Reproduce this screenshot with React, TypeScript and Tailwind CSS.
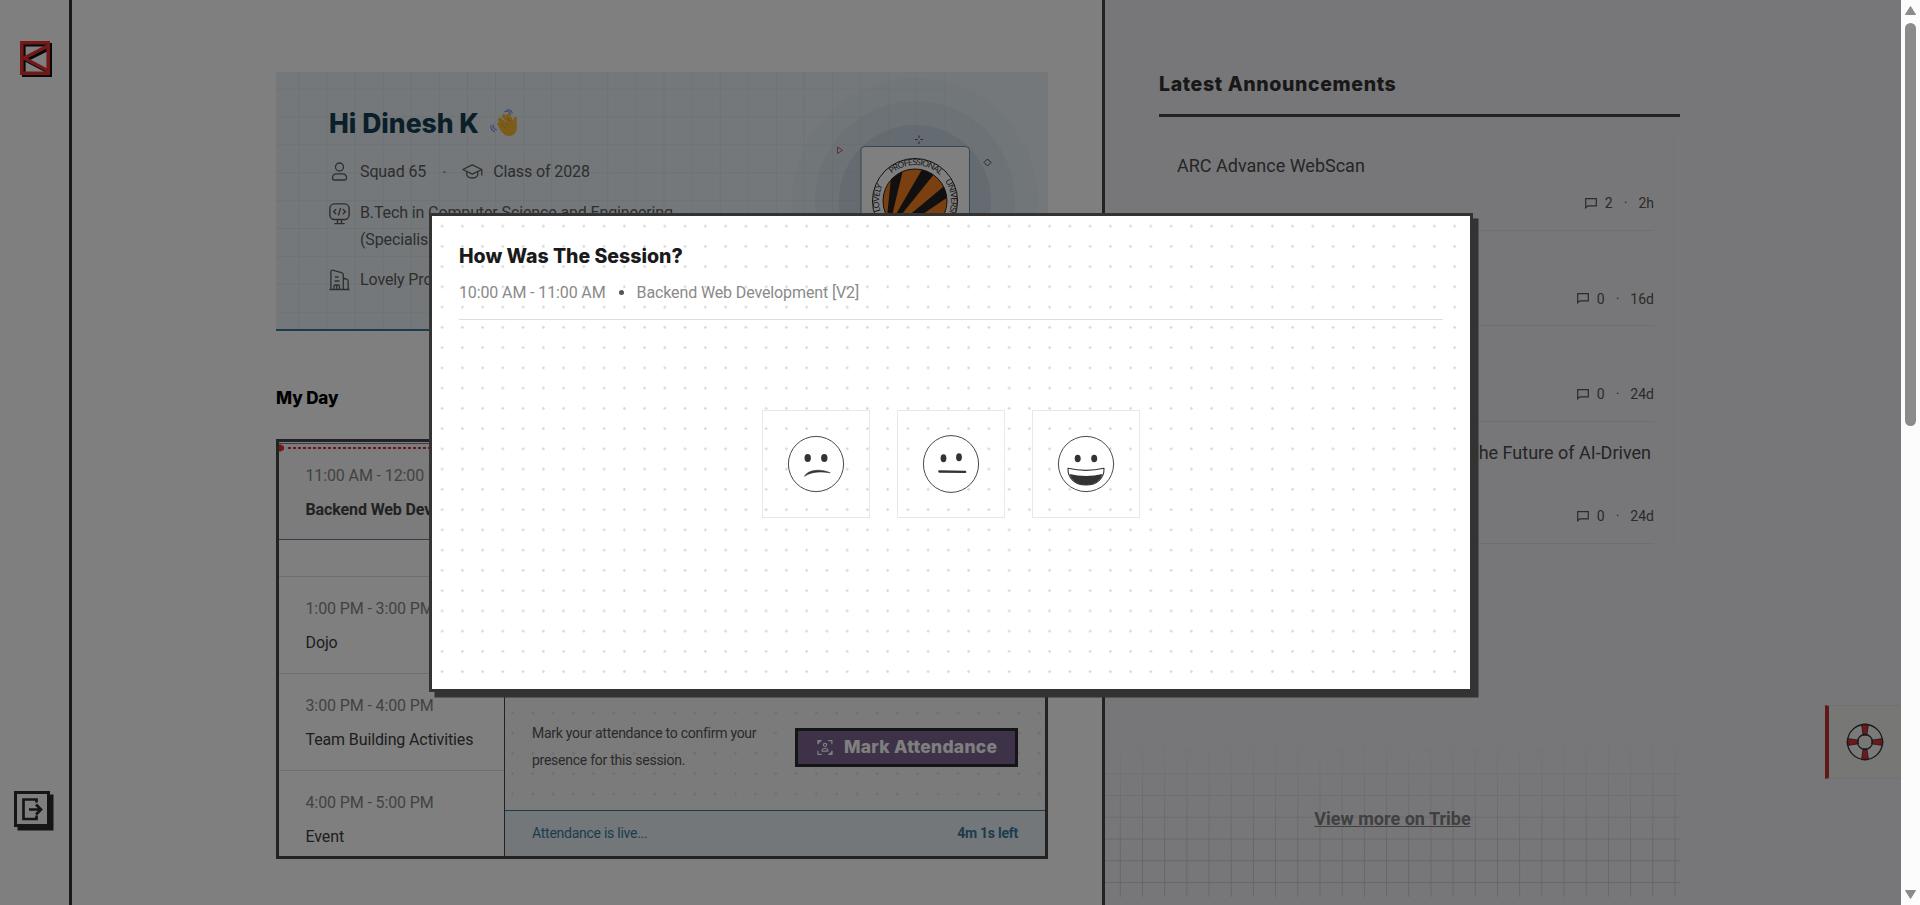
import React from "react";

const heading = "[font-family:Inter,sans-serif] font-extrabold whitespace-nowrap";

function BrandLogo() {
  return (
    <svg width="33" height="37" viewBox="0 0 33 37" className="block">
      <g transform="translate(2 2)" stroke="#111" fill="none" strokeWidth="3.6">
        <path d="M1.8 1.8H28.2V32.2H1.8Z" />
        <path d="M27.5 5.500 4 17.200 27.500 29.500" strokeWidth="3.200" />
      </g>
      <g stroke="#e63235" fill="none" strokeWidth="3.6">
        <path d="M1.8 1.8H28.200V32.200H1.800Z" />
        <path d="M27.5 5 4 17 27.500 29.500" strokeWidth="3.200" />
      </g>
    </svg>
  );
}

function LogoutIcon() {
  return (
    <svg width="30" height="30" viewBox="0 0 30 30" fill="none" stroke="#2c2c2c" strokeWidth="2.700">
      <path d="M19.500 8.500V5.500H6.500V25H19.500V21.500" />
      <path d="M12 15.500H24M19 10.500 24 15.500 19 20.500" />
    </svg>
  );
}

function UserIcon() {
  return (
    <svg width="21" height="21" viewBox="0 0 21 21" fill="none" stroke="currentColor" strokeWidth="1.3">
      <circle cx="10.500" cy="6" r="4" />
      <path d="M3.500 17.200C3.500 14 5.500 12.800 7.500 12.800H13.500C15.500 12.800 17.500 14 17.500 17.200C17.500 18.500 17 19 15.800 19H5.200C4 19 3.500 18.500 3.500 17.200Z" />
    </svg>
  );
}

function CapIcon() {
  return (
    <svg width="21" height="21" viewBox="0 0 21 21" fill="none" stroke="currentColor" strokeWidth="1.3" strokeLinejoin="round">
      <path d="M.8 8.500 10.300 3.800 19.800 8.500 10.300 13.200Z" />
      <path d="M4.800 10.800V14C6.500 18 14 18 15.800 14V10.800M19.800 8.500V14.500" />
    </svg>
  );
}

function MonitorIcon() {
  return (
    <svg width="21" height="22" viewBox="0 0 21 22" fill="none" stroke="currentColor" strokeWidth="1.4" strokeLinecap="round" strokeLinejoin="round">
      <rect x=".9" y=".9" width="19.200" height="15.600" rx="4.500" />
      <path d="M6.800 6.600 4.600 8.700 6.800 10.800M14.200 6.600 16.400 8.700 14.200 10.800M11.500 5.400 9.500 12M8.500 16.800V20.300M12.500 16.800V20.300M5.800 20.600H15.200" />
    </svg>
  );
}

function BuildingIcon() {
  return (
    <svg width="21" height="22" viewBox="0 0 21 22" fill="none" stroke="currentColor" strokeWidth="1.3">
      <path d="M.5 20.500H20.500M1.900 20.500V2.600C1.900 1.500 2.500 .9 3.500 1.100L12.500 3.500C13.800 3.900 14.300 4.500 14.300 5.600V20.500M14.300 9.200 17.500 10.200C18.800 10.600 19.200 11.200 19.200 12.200V20.500M5 20.500V17.500C5 16.500 5.500 16 6.500 16H9C10 16 10.500 16.500 10.500 17.500V20.500M7.800 16V20.500M6 8H9.500M5.500 12H10.500" />
    </svg>
  );
}

function WaveIcon() {
  return (
    <svg width="28" height="28" viewBox="0 0 28 28" className="block">
      <path d="M12 15 24 12C26 15 27.200 17 26.800 20C26.200 24.500 23 27 19 27C14.500 27 10.500 22 8.500 18Z" fill="#f8b830" />
      <g fill="none" stroke="#f8b830" strokeLinecap="round" strokeWidth="3.700">
        <path d="M9 15 15 21.500M9.800 10.500 17 18M13.700 6.900 20.500 15M18.200 6.300 22.500 14" />
        <path d="M25.300 9 25 18" strokeWidth="3.200" />
      </g>
      <path d="M11 14.500 15.500 19M13 10.800 18 16M17 8.300 20.500 13" stroke="#c98a1e" strokeWidth=".7" fill="none" />
      <path d="M14.500 3C17 1 20.500 3 20.500 6M17 1C19 .2 22 2 22.300 4.500M3 15.500C3 18.500 4.500 20.500 7 21M.8 16.500C.8 19.500 2.500 22 5 22.800" fill="none" stroke="#6b8fe0" strokeWidth="1.100" />
    </svg>
  );
}

function CommentIcon() {
  return (
    <svg width="12" height="11" viewBox="0 0 12 11" fill="none" stroke="currentColor" strokeWidth="1.200">
      <path d="M.7 .7H11.300V7.900H2.800L.7 9.800Z" />
    </svg>
  );
}

function HeroArt() {
  return (
    <svg className="absolute inset-0" width="772" height="257" viewBox="0 0 772 257">
      <defs>
        <linearGradient id="fade" x1="0" x2="1">
          <stop offset="0" stopColor="#e8f0f5" stopOpacity="0" />
          <stop offset=".55" stopColor="#e8f0f5" stopOpacity=".5" />
          <stop offset="1" stopColor="#e8f0f5" />
        </linearGradient>
        <clipPath id="disc"><circle cx="639" cy="129" r="32" /></clipPath>
      </defs>
      <rect x="500" width="272" height="257" fill="url(#fade)" />
      <circle cx="639" cy="129" r="123" fill="#a0bdcb" fillOpacity=".08" />
      <circle cx="639" cy="129" r="100" fill="#a0bdcb" fillOpacity=".15" />
      <circle cx="639" cy="129" r="76" fill="#96afc8" fillOpacity=".23" />
      <rect x="585" y="74.500" width="108.500" height="109" rx="4" fill="#fff" stroke="#6f8c9c" />
      <circle cx="639" cy="129" r="42.500" fill="#fff" stroke="#222" strokeWidth="1" />
      <circle cx="639" cy="129" r="32" fill="#f4801f" stroke="#222" strokeWidth="1" />
      <g clipPath="url(#disc)" fill="#231f20">
        <path d="M610.500 150 616 96H627.500L614.500 150Z" />
        <path d="M615.500 150 648 94 659 101 619.500 150Z" />
        <path d="M625 150 669.500 113 673 124.500 635 150Z" />
      </g>
      <g fill="#333" fontFamily="Lato, sans-serif" fontSize="8.500">
        <path id="arc" d="M603 129A36 36 0 0 1 675 129" fill="none" />
        <path id="arcR" d="M639 93A36 36 0 0 1 639 165" fill="none" />
        <path id="arcL" d="M639 165A36 36 0 0 1 639 93" fill="none" />
        <text textLength="53" lengthAdjust="spacing"><textPath href="#arc" startOffset="31">PROFESSIONAL</textPath></text>
        <text textLength="42" lengthAdjust="spacing"><textPath href="#arcR" startOffset="35">UNIVERSITY</textPath></text>
        <text textLength="27" lengthAdjust="spacing"><textPath href="#arcL" startOffset="46">LOVELY</textPath></text>
      </g>
      <path d="M561.500 75 566.500 78.300 561.500 81.500Z" fill="none" stroke="#d05060" />
      <path d="M643 63.500V66M643 69.500V72M639 67.500H641.500M644.500 67.500H647" stroke="#4c4266" />
      <path d="M711.500 87 715 90.500 711.500 94 708 90.500Z" fill="none" stroke="#4c4266" />
    </svg>
  );
}

function Hero() {
  return (
    <section className="relative h-[259px] shrink-0 border-b-2 border-[#38799c] bg-[#e8f0f5] [background-image:linear-gradient(to_right,#dae6eb_1px,transparent_1px),linear-gradient(to_bottom,#dae6eb_1px,transparent_1px)] [background-size:28.080px_27.900px] [background-position:22.500px_16.500px]">
      <HeroArt />
      <div className="relative pl-[53px] pt-[34px] text-base leading-[27px] tracking-[-0.12px] text-[#5c5c5c]">
        <div className="flex h-[34px] items-center gap-[11px]">
          <h1 className={heading + " text-[26.5px] leading-[34px] tracking-[0px] text-[#173e54]"}>Hi Dinesh K</h1>
          <WaveIcon />
        </div>
        <div className="mt-[18px] flex h-[27px] items-center">
          <UserIcon />
          <span className="ml-[10px]">Squad 65</span>
          <span className="mx-4 mt-[2px]">·</span>
          <CapIcon />
          <span className="ml-[10px]">Class of 2028</span>
        </div>
        <div className="mt-[14px] flex">
          <div className="pt-[4px]"><MonitorIcon /></div>
          <span className="ml-[10px]">B.Tech in Computer Science and Engineering<br />(Specialisation in AI and ML)</span>
        </div>
        <div className="mt-[13px] flex items-center">
          <BuildingIcon />
          <span className="ml-[10px]">Lovely Professional University</span>
        </div>
      </div>
    </section>
  );
}

function Slot({ time, title }: { time: string; title: string }) {
  return (
    <div className="h-[97px] shrink-0 border-t border-[#dcdcdc] pl-[26.500px] pt-[18px] text-base leading-[27px] tracking-[-0.12px] whitespace-nowrap">
      <div className="text-[#858585]">{time}</div>
      <div className="mt-[7px] text-[#3c3c3c]">{title}</div>
    </div>
  );
}

function ScanIcon() {
  return (
    <svg width="16" height="17" viewBox="0 0 17 17" fill="none" stroke="#fff" strokeWidth="1.200">
      <path d="M1 5V1H5M12 1.200H15.800V5M1 12V15.800H5" />
      <path d="M1 1H5L1 5ZM16 16H12L16 12Z" fill="#fff" stroke="none" />
      <path d="M12 15.800H16V12" />
      <circle cx="8.500" cy="5.800" r="1.700" />
      <path d="M5.500 12.300V11.500C5.500 10 6.500 9.500 8.500 9.500S11.500 10 11.500 11.500V12.300Z" />
    </svg>
  );
}

function DayCard() {
  return (
    <section className="mt-[29px] flex h-[420px] shrink-0 overflow-hidden border-[3px] border-[#444]">
      <div className="flex w-[226px] shrink-0 flex-col border-r border-[#444]">
        <div className="mt-px h-[97px] shrink-0 border-y border-[#7a7398] bg-[#f8f8f9] text-base leading-[27px] tracking-[-0.12px] whitespace-nowrap">
          <div className="flex h-[8px] items-center">
            <svg width="9" height="8" viewBox="0 0 9 8" className="shrink-0"><path d="M0 .5H2L5 2.500V5.500L2 7.500H0Z" fill="#e42c33" /></svg>
            <div className="h-[2px] flex-1 bg-[repeating-linear-gradient(to_right,#e42c33_0_3px,transparent_3px_5px)]" />
          </div>
          <div className="pl-[26.500px] pt-[10px]">
            <div className="text-[#858585]">11:00 AM - 12:00 PM</div>
            <div className="mt-[7px] font-bold text-[#444]">Backend Web Dev...</div>
          </div>
        </div>
        <div className="h-[36px] shrink-0" />
        <Slot time="1:00 PM - 3:00 PM" title="Dojo" />
        <Slot time="3:00 PM - 4:00 PM" title="Team Building Activities" />
        <Slot time="4:00 PM - 5:00 PM" title="Event" />
      </div>
      <div className="flex flex-1 flex-col text-sm tracking-[-0.26px]">
        <div className="flex flex-1 items-end justify-between bg-[#f7f7f7] bg-[radial-gradient(circle,#dedede_1px,transparent_1.500px)] [background-size:20.250px_20.250px] [background-position:-2.500px_-2.500px] pr-[27px] pb-[36px] pl-[27px]">
          <p className="leading-[27px] text-[#555] whitespace-nowrap">Mark your attendance to confirm your<br />presence for this session.</p>
          <button className="mb-[7px] flex h-[39px] w-[223px] items-center border-[3px] border-[#2b2b2b] bg-[#7b6490] pl-[19px]">
            <ScanIcon />
            <span className={heading + " ml-[11px] pb-[2px] text-[17.5px] tracking-[0.27px] text-white"}>Mark Attendance</span>
          </button>
        </div>
        <div className="flex h-[46px] shrink-0 items-center justify-between border-t border-[#38799c] bg-[#e6eef3] px-[27px] pb-[2px] text-[#38799c]">
          <span>Attendance is live...</span>
          <span className="font-bold">4m 1s left</span>
        </div>
      </div>
    </section>
  );
}

function Announcement({ title, count, age, tall }: { title: string; count: string; age: string; tall?: boolean }) {
  return (
    <div className={(tall ? "h-[122px]" : "h-[95.500px]") + " flex shrink-0 flex-col justify-between border-b border-[#dedee1] pt-[17px] pb-[16.500px]"}>
      <div className={(tall ? "text-right pr-[3px]" : "") + " text-lg leading-[27px] whitespace-nowrap text-[#4a4a4a]"}>{title}</div>
      <div className="flex items-center justify-end text-sm leading-[20px] text-[#555]">
        <CommentIcon />
        <span className="ml-[8px]">{count}</span>
        <span className="mx-[11px]">·</span>
        <span>{age}</span>
      </div>
    </div>
  );
}

function Announcements() {
  return (
    <aside className="relative flex w-[799px] shrink-0 flex-col border-l-[3px] border-[#444] bg-[#efeff3]">
      <div className="ml-[54px] flex h-[474px] w-[521px] flex-col">
        <h2 className={heading + " mt-[71px] text-[19.5px] leading-[27px] tracking-[0.62px] text-[#303030]"}>Latest Announcements</h2>
        <div className="mt-[16px] h-[3px] shrink-0 bg-[#444]" />
        <div className="mt-[18px] flex flex-col border-r-[3px] border-[#f1f1f4] pr-[23px] pl-[18px]">
          <Announcement title="ARC Advance WebScan" count="2" age="2h" />
          <Announcement title="Campus Hackathon" count="0" age="16d" />
          <Announcement title="Coding Contest" count="0" age="24d" />
          <Announcement title="Masterclass: Building and Shaping the Future of AI-Driven" count="0" age="24d" tall />
        </div>
      </div>
      <div className="mt-auto mb-[8px] flex h-[170px] w-[575px] shrink-0 items-center justify-center bg-[linear-gradient(to_bottom,#efeff3,transparent_75%),linear-gradient(to_right,#cdcdd1_1px,transparent_1px),linear-gradient(to_bottom,#cdcdd1_1px,transparent_1px)] [background-size:100%_100%,22.190px_21.800px,22.190px_21.800px] [background-position:0_0,14.800px_2.500px,14.800px_2.500px]">
        <a className="mt-[13px] text-lg font-bold whitespace-nowrap text-[#808080] underline">View more on Tribe</a>
      </div>
      <div className="absolute top-[705px] right-0 flex h-[74px] w-[76px] items-center justify-center border-y border-l-4 border-y-[#e2e2e2] border-l-[#c52f33] bg-[#eeeeec]">
        <svg width="38" height="38" viewBox="0 0 38 38">
          <circle cx="19" cy="19" r="12.500" fill="none" stroke="#f5f5f5" strokeWidth="9" />
          <g fill="#e32f35" stroke="#333" strokeWidth=".8">
            <path id="seg" d="M15.500 1.400Q19 .6 22.500 1.400L20.800 12.400Q19 11.800 17.200 12.400Z" />
            <use href="#seg" transform="rotate(90 19 19)" />
            <use href="#seg" transform="rotate(180 19 19)" />
            <use href="#seg" transform="rotate(270 19 19)" />
          </g>
          <g fill="none" stroke="#333" strokeWidth="1.300">
            <circle cx="19" cy="19" r="17.500" />
            <circle cx="19" cy="19" r="7.500" />
          </g>
        </svg>
      </div>
    </aside>
  );
}

function Face({ mood }: { mood: "sad" | "neutral" | "happy" }) {
  return (
    <button className="flex size-[108px] items-center justify-center border border-[#e8e8e8]">
      <svg width="60" height="60" viewBox="0 0 60 60" fill="#333">
        <ellipse cx="30" cy="30" rx="27.600" ry={mood === "neutral" ? 28.4 : 27.6} fill="#fff" stroke="#333" strokeWidth=".9" />
        {mood === "sad" && (
          <>
            <ellipse cx="21.700" cy="24" rx="3.200" ry="3.900" />
            <ellipse cx="38.300" cy="24" rx="3.200" ry="3.900" />
            <path d="M18.500 42.300C22 35.500 35 34.500 44.200 38.800C36 37.500 26 37 18.500 42.300Z" stroke="#333" strokeWidth=".6" />
          </>
        )}
        {mood === "neutral" && (
          <>
            <ellipse cx="22.500" cy="24.200" rx="2.900" ry="4" />
            <ellipse cx="38" cy="23.200" rx="2.900" ry="4" />
            <path d="M18.300 37.500 44.200 37.900" fill="none" stroke="#333" strokeWidth="2.300" strokeLinecap="round" />
          </>
        )}
        {mood === "happy" && (
          <>
            <ellipse cx="21.700" cy="24.500" rx="3" ry="3.800" />
            <ellipse cx="38.200" cy="24.500" rx="3" ry="3.800" />
            <path d="M12 34.300Q30 38.500 48 34.300C48.500 44 41 51 30 51S11.500 44 12 34.300Z" fill="#fff" stroke="#333" strokeWidth="1.100" strokeLinejoin="round" />
            <path d="M13.500 40Q30 44 46.500 40C44.500 46.500 38.500 51 30 51S15.500 46.500 13.500 40Z" />
          </>
        )}
      </svg>
    </button>
  );
}

function SessionModal() {
  return (
    <div className="absolute inset-y-0 left-0 flex w-[1901px] bg-black/50">
      <div role="dialog" className="mt-[213px] ml-[429px] flex h-[479px] w-[1044px] flex-col border-[3px] border-[#333] bg-white bg-[radial-gradient(circle,#d9d9d9_1px,transparent_1.500px)] [background-size:20.250px_20.250px] px-[27px] shadow-[5.500px_5.500px_0_#333]">
        <h2 className={heading + " mt-[27px] text-[19.5px] leading-[27px] tracking-[0px] text-[#1a1a1a]"}>How Was The Session?</h2>
        <div className="mt-[9px] flex h-[41px] items-start border-b border-[#ddd] text-base leading-[27px] tracking-[-0.12px] text-[#8a8a8a]">
          <span>10:00 AM - 11:00 AM</span>
          <span className="mx-[13px] mt-[11px] size-[5px] rounded-full bg-[#555]" />
          <span>Backend Web Development [V2]</span>
        </div>
        <div className="mt-[90px] flex justify-center gap-[27px]">
          <Face mood="sad" />
          <Face mood="neutral" />
          <Face mood="happy" />
        </div>
      </div>
    </div>
  );
}

function Scrollbar() {
  return (
    <div className="flex w-[19px] shrink-0 flex-col items-center bg-[#fcfcfc] py-[6px]">
      <svg width="11" height="9" viewBox="0 0 11 9"><path d="M5.500 .5 10.500 8.500H.5Z" fill="#8b8b8b" stroke="#8b8b8b" strokeLinejoin="round" /></svg>
      <div className="mt-[8px] h-[403px] w-[11px] rounded-full bg-[#8b8b8b]" />
      <svg width="11" height="9" viewBox="0 0 11 9" className="mt-auto"><path d="M5.500 8.500 10.500 .5H.5Z" fill="#8b8b8b" stroke="#8b8b8b" strokeLinejoin="round" /></svg>
    </div>
  );
}

export default function App() {
  return (
    <div className="relative flex h-[905px] w-[1920px] overflow-hidden bg-white [font-family:Roboto,sans-serif]">
      <nav className="flex w-[72px] shrink-0 flex-col justify-between border-r-[3px] border-[#333] pt-[41px] pb-[78px]">
        <div className="pl-[20px]"><BrandLogo /></div>
        <div className="ml-[14px] flex size-[36px] items-center justify-center border-[3px] border-[#2c2c2c] bg-white shadow-[3.500px_3.500px_0_#2c2c2c]"><LogoutIcon /></div>
      </nav>
      <main className="flex w-[1030px] shrink-0 flex-col pt-[72px] pr-[54px] pl-[204px]">
        <Hero />
        <h2 className={heading + " mt-[55px] text-[17px] leading-[24px] tracking-[-0.1px] text-black"}>My Day</h2>
        <DayCard />
      </main>
      <Announcements />
      <Scrollbar />
      <SessionModal />
    </div>
  );
}
